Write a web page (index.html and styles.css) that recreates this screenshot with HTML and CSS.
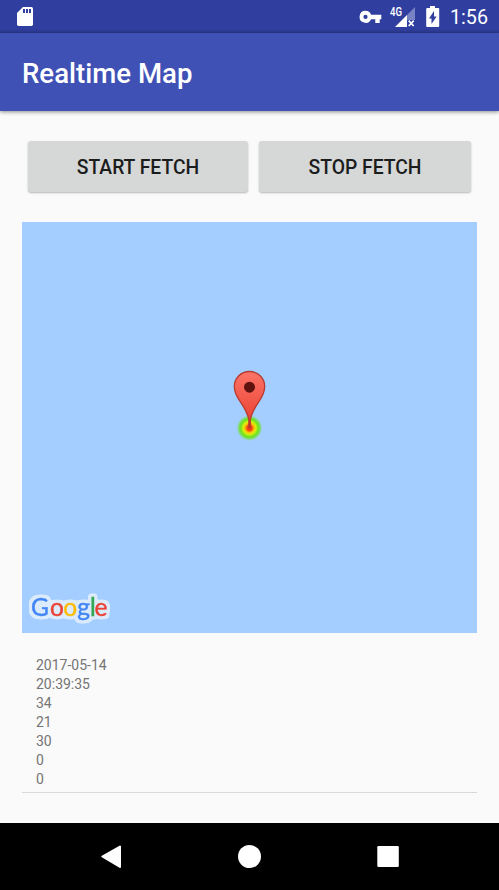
FILE: index.html
```html
<!DOCTYPE html>
<html lang="en">
<head>
<meta charset="utf-8">
<title>Realtime Map</title>
<link rel="stylesheet" href="styles.css">
</head>
<body>
<div class="screen">
  <div class="status-bar">
    <svg class="sd-icon" width="18" height="22" viewBox="0 0 18 22"><path fill="#fff" d="M7 1H15.3Q17 1 17 2.7V18.3Q17 20 15.3 20H2.7Q1 20 1 18.3V7Z"/><path fill="#303f9f" d="M7 3h2v4H7zM10 3h2v4h-2zM13 3h2v4h-2z"/></svg>
    <div class="status-icons">
      <svg class="key-icon" width="24" height="14" viewBox="0 0 24 14"><path fill="#fff" fill-rule="evenodd" d="M6.5.8a6 6 0 0 1 5.6 3.9H22.300v4.500h-1.600V13h-4.400V9.200h-4.200A6 6 0 1 1 6.500.8ZM6.500 4.800a2.100 2.100 0 1 0 0 4.200a2.100 2.100 0 0 0 0-4.200Z"/></svg>
      <svg class="signal-icon" width="28" height="24" viewBox="0 0 28 24"><path fill="#7883c3" d="M25 3v13h-8v-5Z"/><path fill="#fff" d="M17 11v12H5Z"/><path stroke="#fff" stroke-width="1.700" d="m18.700 16.600 5 5.400m0-5.400-5 5.400"/><text class="network" x="0" y="12" textLength="12" lengthAdjust="spacingAndGlyphs">4G</text></svg>
      <svg class="battery-icon" width="14" height="22" viewBox="0 0 14 22"><path fill="#fff" d="M4 0h5v2h3.200q1 0 1 1v17q0 1-1 1H1.200q-1 0-1-1V3q0-1 1-1H4Z"/><path fill="#303f9f" d="M8 5v5.500h2.600L5.500 18v-5.600H3Z"/></svg>
      <span class="clock">1:56</span>
    </div>
  </div>
  <header class="app-bar"><h1>Realtime Map</h1></header>
  <main>
    <div class="actions">
      <button class="start">Start fetch</button>
      <button class="stop">Stop fetch</button>
    </div>
    <div class="map">
      <svg class="marker" width="36" height="74" viewBox="0 0 36 74">
        <defs>
          <radialGradient id="heat"><stop offset="0" stop-color="#f22b12"/><stop offset=".2" stop-color="#f54b10"/><stop offset=".36" stop-color="#f6c80a"/><stop offset=".5" stop-color="#d6ef10"/><stop offset=".66" stop-color="#70e419"/><stop offset=".8" stop-color="#70df38" stop-opacity=".85"/><stop offset="1" stop-color="#8bdc78" stop-opacity="0"/></radialGradient>
          <linearGradient id="pin" x2="0" y2="1"><stop stop-color="#fc7567"/><stop offset="1" stop-color="#e93b2d"/></linearGradient>
        </defs>
        <circle cx="18.500" cy="58" r="13" fill="url(#heat)"/>
        <path fill="url(#pin)" stroke="#b53a2f" stroke-width="1.300" d="M18.500 1.500C9.700 1.500 3.300 8.400 3.300 16.500C3.300 23 6.200 27.400 9.700 32.400C13.800 38.500 16.800 43.500 17.900 50V57.500H19.300V50C20.300 43.500 23.300 38.500 27.400 32.400C30.900 27.400 33.700 23 33.700 16.500C33.700 8.400 27.300 1.500 18.500 1.500Z"/>
        <circle cx="18.500" cy="17.200" r="5.500" fill="#5e130e"/>
      </svg>
      <svg class="google" width="96" height="44" viewBox="0 0 96 44">
        <defs><filter id="halo" x="-10%" y="-30%" width="120%" height="160%" color-interpolation-filters="sRGB"><feMorphology in="SourceAlpha" operator="dilate" radius="1.500"/><feGaussianBlur stdDeviation="1.200"/><feComponentTransfer result="edge"><feFuncA type="linear" slope="8" intercept="-.6"/></feComponentTransfer><feFlood flood-color="#dcebfb"/><feComposite in2="edge" operator="in" result="outline"/><feMerge><feMergeNode in="outline"/><feMergeNode in="SourceGraphic"/></feMerge></filter></defs>
        <text y="28.200" filter="url(#halo)"><tspan class="blue" x="9">G</tspan><tspan class="red" x="28">o</tspan><tspan class="yellow" x="41.200">o</tspan><tspan class="blue" x="55.200">g</tspan><tspan class="green" x="68">l</tspan><tspan class="red" x="72.500">e</tspan></text>
      </svg>
    </div>
    <div class="readings">
      <div>2017-05-14</div><div>20:39:35</div><div>34</div><div>21</div><div>30</div><div>0</div><div>0</div>
    </div>
  </main>
  <nav class="nav-bar">
    <svg width="24" height="26" viewBox="0 0 24 26"><path fill="#fff" stroke="#fff" stroke-width="2" stroke-linejoin="round" d="M2.300 13.500 20 3.500v20.500Z"/></svg>
    <svg width="24" height="26" viewBox="0 0 24 26"><circle cx="11.500" cy="13.500" r="11.500" fill="#fff"/></svg>
    <svg width="24" height="26" viewBox="0 0 24 26"><rect x="1.300" y="3" width="21.500" height="21" rx="1.200" fill="#fff"/></svg>
  </nav>
</div>
</body>
</html>
```
FILE: styles.css
```css
* { box-sizing: border-box; }
body { margin: 0; font-family: Roboto, sans-serif; background: #fafafa; }
svg { display: block; flex: none; }
.screen { width: 499px; height: 890px; display: flex; flex-direction: column; overflow: hidden; }
.status-bar { height: 33px; flex: none; display: flex; justify-content: space-between; align-items: flex-start; padding: 0 11px 0 16px; background: linear-gradient(#303f9f 29px, #2b398f); }
.sd-icon { margin-top: 6px; }
.status-icons { display: flex; align-items: flex-start; }
.key-icon { margin: 10px 7px 0 0; }
.signal-icon { margin: 4px 8px 0 0; overflow: visible; }
.network { font: 500 13px Roboto, sans-serif; fill: #fff; }
.battery-icon { margin: 6px 10px 0 0; }
.clock { width: 38px; color: #fff; font-size: 19.700px; line-height: 36px; white-space: nowrap; }
.app-bar { height: 78px; flex: none; display: flex; align-items: center; padding: 4px 22px 0; background: #3f51b5; box-shadow: 0 1px 4px rgba(0,0,0,.45); }
h1 { margin: 0; color: #fff; font-size: 27.600px; font-weight: 500; line-height: 36px; }
main { flex: 1; padding: 30px 22px 0; }
.actions { display: flex; gap: 11px; margin: 0 6px 30px; }
button { height: 51px; border: 0; border-radius: 3px; padding: 2px 0 0; background: #d6d7d7; color: #1b1c1c; font: 500 19.300px Roboto, sans-serif; text-transform: uppercase; box-shadow: 0 1px 2px rgba(0,0,0,.28); }
.start { width: 220px; }
.stop { width: 212px; }
.map { height: 411px; position: relative; background: #a3ceff; }
.marker { position: absolute; left: 209px; top: 148px; }
.google { position: absolute; left: 0; top: 366px; overflow: visible; }
.google text { font: 400 24.500px/1 Lato, sans-serif; stroke-width: .4px; }
.blue { fill: #4285f4; stroke: #4285f4; }
.red { fill: #ea4335; stroke: #ea4335; }
.yellow { fill: #fbbc05; stroke: #fbbc05; }
.green { fill: #34a853; stroke: #34a853; }
.readings { height: 160px; padding: 23px 14px 0; border-bottom: 1px solid #d9d9d9; color: #757575; font-size: 14px; line-height: 19px; }
.nav-bar { height: 67px; flex: none; display: flex; justify-content: space-between; padding: 20px 99px 0 100px; background: #000; }
```
